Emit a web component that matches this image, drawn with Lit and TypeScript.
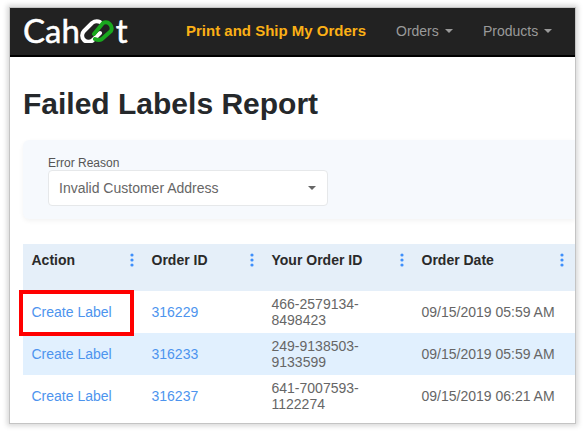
import { LitElement, html, css, svg } from "lit";
import { customElement } from "lit/decorators.js";

const rows = [
  ["316229", "466-2579134-", "8498423", "09/15/2019 05:59 AM"],
  ["316233", "249-9138503-", "9133599", "09/15/2019 05:59 AM"],
  ["316237", "641-7007593-", "1122274", "09/15/2019 06:21 AM"],
];

const dots = svg`<svg class="dots" width="4" height="14" viewBox="0 0 4 14"><circle cx="2" cy="2" r="1.6"/><circle cx="2" cy="7" r="1.6"/><circle cx="2" cy="12" r="1.6"/></svg>`;

@customElement("app-root")
export class AppRoot extends LitElement {
  static styles = css`
    :host { display: block; width: 585px; height: 431px; background: #fff; font-family: "Liberation Sans", Arial, sans-serif; padding: 7px 9px 0; box-sizing: border-box; }
    .frame { position: relative; width: 567px; height: 417px; box-sizing: border-box; border: 1px solid #c4c4c4; box-shadow: 0 0 5px 2px #d8d8d8; background: #fff; overflow: hidden; }
    .nav { height: 49px; box-sizing: border-box; background: #222; border-bottom: 2px solid #000; display: flex; align-items: center; padding: 0 0 2px 13px; }
    .logo { width: 163px; display: flex; align-items: center; color: #fff; font-family: "Lato", sans-serif; font-weight: 400; -webkit-text-stroke: 0.5px #fff; font-size: 33px; line-height: 1; height: 32px; }
    .logo svg { margin: 0 2px 0 0; flex: none; }
    .primary { font-weight: bold; font-size: 15px; color: #fbb016; width: 210px; white-space: nowrap; }
    .item { color: #9a9a9a; font-size: 14px; display: flex; align-items: center; gap: 6px; }
    .item.orders { width: 87px; }
    .caret { width: 0; height: 0; border: 4px solid transparent; border-top-color: #9a9a9a; border-bottom: 0; }
    h1 { margin: 0; padding: 31px 0 0 13px; font-size: 30px; line-height: 32px; font-weight: bold; color: #25282b; height: 52px; }
    .panel { margin: 0 0 25px 13px; height: 79px; box-sizing: border-box; background: #f6f9fd; border-radius: 6px 0 0 6px; box-shadow: 0 2px 5px rgba(0,0,0,0.05); padding: 16px 25px 0; }
    .panel label { display: block; font-size: 12px; line-height: 14px; color: #555; }
    .select { width: 280px; height: 36px; box-sizing: border-box; background: #fff; border: 1px solid #e6e8ea; border-radius: 4px; display: flex; align-items: center; justify-content: space-between; padding: 0 11px 0 10px; font-size: 14px; color: #666; }
    .select .caret { border-top-color: #666; }
    .table { margin-left: 13px; display: grid; grid-template-columns: 120px 120px 150px 162px; font-size: 14px; color: #666; }
    .th { height: 47px; background: #e5eff9; display: flex; align-items: center; justify-content: space-between; padding: 0 9.5px 15px 8.5px; box-sizing: border-box; font-weight: bold; font-size: 14px; color: #2a2a2a; }
    .th:nth-child(4) { padding-right: 11.5px; }
    .th .dots { fill: #3f8ffb; }
    .td { height: 42px; display: flex; align-items: center; padding-left: 8.5px; box-sizing: border-box; line-height: 16px; white-space: nowrap; }
    .td.alt { background: #e1f0fe; }
    a { color: #4d94ee; text-decoration: none; }
    .mark { position: absolute; left: 9px; top: 282px; width: 115px; height: 46px; box-sizing: border-box; border: 4px solid #f00; }
  `;

  render() {
    return html`<div class="frame">
      <div class="nav">
        <div class="logo">Cah<svg width="34" height="25" viewBox="0 0 34 25"><g fill="none" stroke-width="4" stroke-linecap="round"><path stroke="#fff" d="M20 4 Q16 2 12 5 L4 13 A6 6 0 0 0 13 22 L20 15"/><path stroke="#19a81e" d="M14 16 L23 5 A6 6 0 0 1 31 13 L22 21 Q19 23 15 21"/></g></svg>t</div>
        <div class="primary">Print and Ship My Orders</div>
        <div class="item orders">Orders <span class="caret"></span></div>
        <div class="item">Products <span class="caret"></span></div>
      </div>
      <h1>Failed Labels Report</h1>
      <div class="panel">
        <label>Error Reason</label>
        <div class="select"><span>Invalid Customer Address</span><span class="caret"></span></div>
      </div>
      <div class="table">
        <div class="th">Action ${dots}</div>
        <div class="th">Order ID ${dots}</div>
        <div class="th">Your Order ID ${dots}</div>
        <div class="th">Order Date ${dots}</div>
        ${rows.map((r, i) => {
          const c = i === 1 ? "td alt" : "td";
          return html`
            <div class=${c}><a>Create Label</a></div>
            <div class=${c}><a>${r[0]}</a></div>
            <div class=${c}><span>${r[1]}<br />${r[2]}</span></div>
            <div class=${c}>${r[3]}</div>`;
        })}
      </div>
      <div class="mark"></div>
    </div>`;
  }
}
